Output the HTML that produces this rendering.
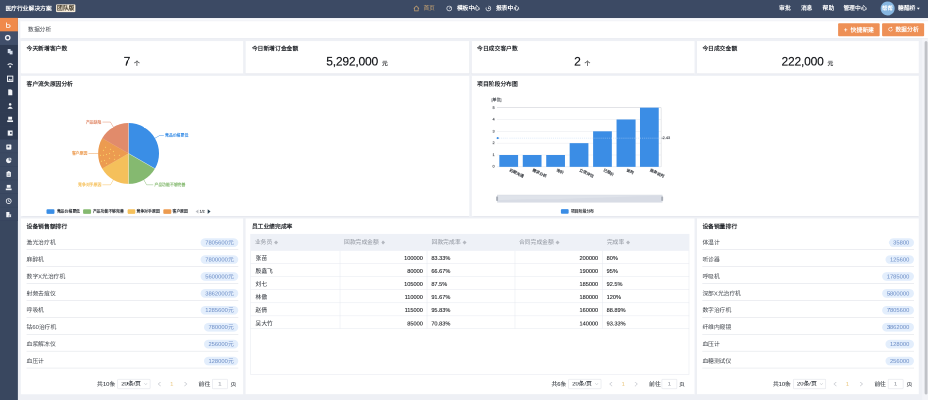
<!DOCTYPE html>
<html lang="zh-CN"><head><meta charset="utf-8"><title>数据分析</title>
<style>
html,body{margin:0;padding:0;width:928px;height:400px;overflow:hidden;background:#eef0f5}
body{font-family:"Liberation Sans",sans-serif}
#wrap{position:absolute;left:0;top:0;width:1856px;height:800px;transform:scale(0.5);transform-origin:0 0;will-change:transform;overflow:hidden;background:#eef0f5}
#app{position:absolute;left:0;top:0;width:1920px;height:830px;transform:scale(0.9666667);transform-origin:0 0;background:#eef0f5;color:#2b2f36;font-size:12px;line-height:1;overflow:hidden}
#app *{box-sizing:border-box}
.abs{position:absolute}
.t{position:absolute;white-space:nowrap;line-height:14px;height:14px}
.nav{position:absolute;left:0;top:0;width:1920px;height:36.5px;background:#3c4a64;color:#fff;border-bottom:1px solid #344159}
.side{position:absolute;left:0;top:37px;width:37px;height:800px;background:#39475f}
.si{position:absolute;left:0;width:37px;height:28px}
.card{position:absolute;background:#fff;box-shadow:0 1px 1.5px rgba(70,80,110,.10)}
.ct{position:absolute;left:13px;top:9px;font-weight:bold;font-size:12px;line-height:14px;color:#23262b;white-space:nowrap}
.num{position:absolute;left:0;right:0;top:27px;text-align:center;white-space:nowrap;line-height:30px;color:#16181c}
.num b{font-weight:normal;font-size:25px;letter-spacing:-0.45px;-webkit-text-stroke:0.35px #16181c}
.num i{font-style:normal;font-size:12px;margin-left:8px;-webkit-text-stroke:0.3px #16181c}
.btn{position:absolute;top:47.5px;height:27px;background:#ee9056;color:#fff;border-radius:2px;font-size:12px;font-weight:bold;line-height:27px;text-align:center;white-space:nowrap}
.row{position:absolute;left:13px;right:10.5px;height:35px;border-bottom:1px solid #d9dce3}
.row span{position:absolute;left:0;top:12.3px;line-height:14px;color:#3f434a}
.row em{position:absolute;right:0;top:10.3px;height:18px;line-height:18px;padding:0;text-align:center;border-radius:9px;background:#e3eefc;color:#688ac4;font-style:normal;font-size:12px}
.pg{position:absolute;top:332px;height:22px;font-size:12px;color:#3c4047;white-space:nowrap;-webkit-text-stroke:0.2px}
.pg .t{top:4px}
.pg .sel{position:absolute;top:0;height:21px;border:1px solid #d9dce3;border-radius:2px;line-height:19px;padding-left:7px;color:#3c4047}
.pg .inp{position:absolute;top:0;height:21px;border:1px solid #d9dce3;border-radius:2px;line-height:19px;text-align:center;color:#8d919a}
.th{position:absolute;top:0;height:34px;line-height:34px;color:#8c919b;padding-left:9px;white-space:nowrap}
.th s{text-decoration:none;font-size:8.5px;color:#b4b8c0;margin-left:4px}
.cl{position:absolute;white-space:nowrap;font-size:8px;line-height:10px;height:10px;-webkit-text-stroke:0.3px}
.td{position:absolute;top:0;height:26.85px;line-height:29.5px;color:#17191d;white-space:nowrap;font-size:11.6px;-webkit-text-stroke:0.22px}
</style></head>
<body>
<div id="wrap"><div id="app">
<div class="nav">
<div class="t" style="left:11px;top:11px;font-weight:bold;font-size:12px">医疗行业解决方案</div>
<div class="abs" style="left:116px;top:9px;width:40px;height:16px;background:#f7ecd9;color:#3a3326;border-radius:2px;font-size:12px;line-height:16px;text-align:center;font-weight:bold">团队版</div>
<svg class="abs" style="left:854.5px;top:11px" width="13" height="13" viewBox="0 0 12 12"><path d="M1 6 L6 1.2 L11 6 M2.6 5 V10.6 H9.4 V5" fill="none" stroke="#c9a472" stroke-width="1.3"/></svg>
<div class="t" style="left:876px;top:10px;color:#c9a472">首页</div>
<svg class="abs" style="left:922.5px;top:11px" width="13" height="13" viewBox="0 0 12 12"><circle cx="6" cy="6" r="4.6" fill="none" stroke="#eef0f4" stroke-width="1.3"/><path d="M6 6 L8.6 3.4" stroke="#eef0f4" stroke-width="1.3"/></svg>
<div class="t" style="left:945px;top:10px;font-weight:bold">模板中心</div>
<svg class="abs" style="left:1003.5px;top:11px" width="13" height="13" viewBox="0 0 12 12"><path d="M6 1.4 A4.6 4.6 0 1 1 1.9 3.9" fill="none" stroke="#eef0f4" stroke-width="1.3"/><path d="M6 3.4 V6.3 H8.4" fill="none" stroke="#eef0f4" stroke-width="1.3"/></svg>
<div class="t" style="left:1026px;top:10px;font-weight:bold">报表中心</div>
<div class="t" style="left:1612px;top:10px;font-weight:bold">审批</div>
<div class="t" style="left:1657px;top:10px;font-weight:bold">消息</div>
<div class="t" style="left:1702px;top:10px;font-weight:bold">帮助</div>
<div class="t" style="left:1745px;top:10px;font-weight:bold">管理中心</div>
<div class="abs" style="left:1821.5px;top:2.5px;width:29px;height:29px;border-radius:15px;background:#86b6e0;color:#fff;font-size:11px;font-weight:bold;line-height:29px;text-align:center">帮帮</div>
<div class="t" style="left:1858px;top:10px;font-weight:bold">糖醋桥</div>
<div class="abs" style="left:1897px;top:16px;width:0;height:0;border-left:3px solid transparent;border-right:3px solid transparent;border-top:4px solid #fff"></div>
</div>
<div class="side">
<div class="si" style="top:0px;background:#f08a4b"><svg class="abs" style="left:10px;top:7.5px" width="14" height="14" viewBox="0 0 14 14"><path d="M3.6 1.5 V11.6 H8.2 A2.7 2.7 0 0 0 8.2 6.2 H3.6" fill="none" stroke="#fff" stroke-width="1.7"/></svg></div>
<div class="si" style="top:28px;background:#414f6a"><svg class="abs" style="left:8.5px;top:6px" width="14" height="14" viewBox="0 0 14 14"><circle cx="7" cy="7" r="4.4" fill="none" stroke="#f2f4f8" stroke-width="3"/></svg></div>
<div class="si" style="top:56px;background:#2f3b52"><svg class="abs" style="left:14px;top:6.5px" width="14" height="14" viewBox="0 0 14 14"><path d="M2 1.5 H8 V10 H2Z M6 5 H12 V12.5 H6Z" fill="#d3dcea"/></svg></div>
<div class="si" style="top:84px;background:#2f3b52"><svg class="abs" style="left:14px;top:6.5px" width="14" height="14" viewBox="0 0 14 14"><path d="M2 6.5 A6 6 0 0 1 12 6.5" fill="none" stroke="#f2f4f8" stroke-width="2"/><circle cx="7" cy="10" r="2" fill="#f2f4f8"/></svg></div>
<div class="si" style="top:112px;background:#2f3b52"><svg class="abs" style="left:14px;top:6.5px" width="14" height="14" viewBox="0 0 14 14"><rect x="1.5" y="1.5" width="11" height="11" fill="none" stroke="#f2f4f8" stroke-width="2"/><path d="M3 10.5 L6 6.5 L8 9 L9.5 7.5 L11.5 10.5Z" fill="#f2f4f8"/></svg></div>
<div class="si" style="top:140px;background:#2f3b52"><svg class="abs" style="left:14px;top:6.5px" width="14" height="14" viewBox="0 0 14 14"><path d="M3 1 H9 L11.5 3.5 V13 H3Z" fill="#f2f4f8"/></svg></div>
<div class="si" style="top:168px;background:#2f3b52"><svg class="abs" style="left:14px;top:6.5px" width="14" height="14" viewBox="0 0 14 14"><circle cx="7" cy="4" r="2.6" fill="#f2f4f8"/><path d="M1.5 13 Q7 4.5 12.5 13Z" fill="#f2f4f8"/></svg></div>
<div class="si" style="top:196px;background:#2f3b52"><svg class="abs" style="left:14px;top:6.5px" width="14" height="14" viewBox="0 0 14 14"><rect x="3" y="1.5" width="8" height="6" fill="#f2f4f8"/><rect x="1" y="9" width="12" height="3.5" fill="#f2f4f8"/></svg></div>
<div class="si" style="top:224px;background:#2f3b52"><svg class="abs" style="left:14px;top:6.5px" width="14" height="14" viewBox="0 0 14 14"><path d="M2 2 H12 V12.5 H2Z" fill="#f2f4f8"/><rect x="7" y="5" width="3" height="4" fill="#2f3b52"/></svg></div>
<div class="si" style="top:252px;background:#3b4962;border-bottom:1px solid #33405a"><svg class="abs" style="left:10.5px;top:7.5px" width="14" height="14" viewBox="0 0 14 14"><rect x="2" y="2" width="10.5" height="10.5" rx="1.5" fill="#f2f4f8"/><rect x="4.5" y="4.5" width="4" height="3.5" fill="#3d4b65"/></svg></div>
<div class="si" style="top:280px;background:#3b4962;border-bottom:1px solid #33405a"><svg class="abs" style="left:10.5px;top:7.5px" width="14" height="14" viewBox="0 0 14 14"><path d="M7 1.5 A5.5 5.5 0 1 0 12.5 7 L7 7Z" fill="#f2f4f8"/><path d="M8.5 0.8 A5 5 0 0 1 13.2 5.5 L8.5 5.5Z" fill="#f2f4f8" opacity=".75"/></svg></div>
<div class="si" style="top:308px;background:#3b4962;border-bottom:1px solid #33405a"><svg class="abs" style="left:10.5px;top:7.5px" width="14" height="14" viewBox="0 0 14 14"><rect x="2.5" y="2.5" width="9" height="10.5" rx="1" fill="#f2f4f8"/><rect x="5" y="1" width="4" height="3" fill="#f2f4f8"/><path d="M4.5 7 H9.5 M4.5 9.5 H9.5" stroke="#3d4b65" stroke-width="1"/></svg></div>
<div class="si" style="top:336px;background:#3b4962;border-bottom:1px solid #33405a"><svg class="abs" style="left:10.5px;top:7.5px" width="14" height="14" viewBox="0 0 14 14"><rect x="3" y="1.5" width="8" height="6" fill="#f2f4f8"/><rect x="1" y="9" width="12" height="3.5" fill="#f2f4f8"/></svg></div>
<div class="si" style="top:364px;background:#3b4962;border-bottom:1px solid #33405a"><svg class="abs" style="left:10.5px;top:7.5px" width="14" height="14" viewBox="0 0 14 14"><circle cx="7" cy="7" r="5" fill="none" stroke="#f2f4f8" stroke-width="1.8"/><path d="M7 4 V7.3 L9.3 8.5" fill="none" stroke="#f2f4f8" stroke-width="1.5"/></svg></div>
<div class="si" style="top:392px;background:#3b4962;border-bottom:1px solid #33405a"><svg class="abs" style="left:10.5px;top:7.5px" width="14" height="14" viewBox="0 0 14 14"><path d="M2 1.5 H8.5 V6 H12 V12.5 H2Z" fill="#f2f4f8"/><circle cx="10" cy="10" r="2.6" fill="#f2f4f8" stroke="#3d4b65" stroke-width="1"/></svg></div>
</div>
<div class="card" style="left:42px;top:38.5px;width:1878px;height:40.5px"><div class="abs" style="left:0;top:1px;width:1878px;height:4px;background:#f3f4f8"></div><div class="t" style="left:16px;top:15.5px;font-size:12px;color:#3a3e45">数据分析</div></div>
<div class="btn" style="left:1734px;width:86px"><span style="font-size:13px">+</span>&nbsp; 快捷新建</div>
<div class="btn" style="left:1825px;width:87px"><svg width="11" height="11" viewBox="0 0 12 12" style="vertical-align:-1.5px;margin-right:5px"><path d="M10.2 6 A4.2 4.2 0 1 1 8.2 2.4" fill="none" stroke="#fff" stroke-width="1.2"/><path d="M6.8 0.6 L9.3 2.4 L7 4.2" fill="none" stroke="#fff" stroke-width="1.2"/></svg>数据分析</div>
<div class="card" style="left:42.6px;top:85px;width:460.4px;height:67px"><div class="abs" style="left:-0.6px;top:0;width:461px;height:67px"><div class="ct" style="top:8px">今天新增客户数</div><div class="num"><b>7</b><i>个</i></div></div></div>
<div class="card" style="left:508.0px;top:85px;width:462.9px;height:67px"><div class="abs" style="left:0.0px;top:0;width:461px;height:67px"><div class="ct" style="top:8px">今日新增订金金额</div><div class="num"><b>5,292,000</b><i>元</i></div></div></div>
<div class="card" style="left:975.9px;top:85px;width:460.8px;height:67px"><div class="abs" style="left:-1.9px;top:0;width:461px;height:67px"><div class="ct" style="top:8px">今日成交客户数</div><div class="num"><b>2</b><i>个</i></div></div></div>
<div class="card" style="left:1441.7px;top:85px;width:459.3px;height:67px"><div class="abs" style="left:-1.7px;top:0;width:461px;height:67px"><div class="ct" style="top:8px">今日成交金额</div><div class="num"><b>222,000</b><i>元</i></div></div></div>
<div class="card" style="left:42.6px;top:157px;width:928.3px;height:290px"><div class="abs" style="left:-0.6px;top:0;width:927px;height:290px"><div class="ct" style="top:10px">客户流失原因分析</div>
<svg class="abs" style="left:0;top:0" width="927" height="290" viewBox="0 0 927 290"><path d="M224 160.5 L224.00 97.50 A63 63 0 0 1 278.56 192.00Z" fill="#3a8ee6"/><path d="M224 160.5 L278.56 192.00 A63 63 0 0 1 224.00 223.50Z" fill="#85b970"/><path d="M224 160.5 L224.00 223.50 A63 63 0 0 1 169.44 192.00Z" fill="#f5c05b"/><path d="M224 160.5 L169.44 192.00 A63 63 0 0 1 169.44 129.00Z" fill="#ec9b50"/><path d="M224 160.5 L169.44 129.00 A63 63 0 0 1 224.00 97.50Z" fill="#e18b6b"/><circle cx="176.3" cy="147.8" r="1.25" fill="#f8cd63"/><circle cx="186.6" cy="151.9" r="1.25" fill="#f8cd63"/><circle cx="172.1" cy="154.0" r="1.25" fill="#f8cd63"/><circle cx="192.8" cy="156.4" r="1.25" fill="#f8cd63"/><circle cx="184.6" cy="160.6" r="1.25" fill="#f8cd63"/><circle cx="178.3" cy="162.7" r="1.25" fill="#f8cd63"/><circle cx="165.9" cy="164.3" r="1.25" fill="#f8cd63"/><circle cx="172.1" cy="164.3" r="1.25" fill="#f8cd63"/><circle cx="194.9" cy="164.3" r="1.25" fill="#f8cd63"/><circle cx="205.2" cy="164.3" r="1.25" fill="#f8cd63"/><circle cx="184.6" cy="170.5" r="1.25" fill="#f8cd63"/><circle cx="194.9" cy="172.6" r="1.25" fill="#f8cd63"/><circle cx="174.2" cy="175.1" r="1.25" fill="#f8cd63"/><circle cx="168.0" cy="176.7" r="1.25" fill="#f8cd63"/><circle cx="178.3" cy="180.9" r="1.25" fill="#f8cd63"/><path d="M224 160.5 L224.0 97.5" stroke="#fff" stroke-width="1" opacity=".8"/><path d="M224 160.5 L278.6 192.0" stroke="#fff" stroke-width="1" opacity=".8"/><path d="M224 160.5 L224.0 223.5" stroke="#fff" stroke-width="1" opacity=".8"/><path d="M278.6 129.0 L289.0 123.0 L297 123.0" fill="none" stroke="#3a8ee6" stroke-width="1"/><path d="M255.5 215.1 L261.5 225.5 L275 225.5" fill="none" stroke="#85b970" stroke-width="1"/><path d="M192.5 215.1 L186.5 225.5 L170 225.5" fill="none" stroke="#f5c05b" stroke-width="1"/><path d="M161.0 160.5 L153.0 160.5 L141 160.5" fill="none" stroke="#ec9b50" stroke-width="1"/><path d="M192.5 105.9 L186.5 95.5 L170 95.5" fill="none" stroke="#e18b6b" stroke-width="1"/><rect x="54.2" y="276" width="16.5" height="9.5" rx="2" fill="#3a8ee6"/><rect x="129.9" y="276" width="16.5" height="9.5" rx="2" fill="#85b970"/><rect x="221.4" y="276" width="16.5" height="9.5" rx="2" fill="#f5c05b"/><rect x="295.9" y="276" width="16.5" height="9.5" rx="2" fill="#ec9b50"/><path d="M368.5 276.5 L362.7 280.7 L368.5 285Z" fill="#b9bcc2"/><path d="M387.7 276 L393.6 280.7 L387.7 285.4Z" fill="#2f4554"/></svg>
<div class="cl" style="left:299.5px;top:118.0px;color:#3a8ee6">竞品价格更低</div><div class="cl" style="left:277.5px;top:220.5px;color:#85b970">产品功能不够完善</div><div class="cl" style="right:759.5px;top:220.5px;color:#f5c05b">竞争对手原因</div><div class="cl" style="right:788.5px;top:155.5px;color:#ec9b50">客户原因</div><div class="cl" style="right:759.5px;top:90.5px;color:#e18b6b">产品缺陷</div>
<div class="cl" style="left:75.5px;top:275.7px;color:#2a2d33">竞品价格更低</div>
<div class="cl" style="left:150px;top:275.7px;color:#2a2d33">产品功能不够完善</div>
<div class="cl" style="left:240.4px;top:275.7px;color:#2a2d33">竞争对手原因</div>
<div class="cl" style="left:314.9px;top:275.7px;color:#2a2d33">客户原因</div>
<div class="cl" style="left:371px;top:275.7px;color:#3c4046;font-size:7.5px">1/2</div>
</div></div>
<div class="card" style="left:975.9px;top:157px;width:925.1px;height:290px"><div class="abs" style="left:-1.9px;top:0;width:927px;height:290px"><div class="ct" style="top:10px">项目阶段分布图</div>
<svg class="abs" style="left:0;top:0" width="927" height="290" viewBox="0 0 927 290"><path d="M54.2 188.2 H393.8" stroke="#dde0e6" stroke-width="1"/><path d="M54.2 163.7 H393.8" stroke="#e6e8ec" stroke-width="1"/><path d="M54.2 139.2 H393.8" stroke="#e6e8ec" stroke-width="1"/><path d="M54.2 114.7 H393.8" stroke="#e6e8ec" stroke-width="1"/><path d="M54.2 90.2 H393.8" stroke="#e6e8ec" stroke-width="1"/><path d="M54.2 65.7 H393.8" stroke="#c3c6cc" stroke-width="1"/><path d="M393.8 65.7 V188.2" stroke="#c9ccd2" stroke-width="1"/><rect x="59.1" y="163.7" width="38.8" height="24.5" fill="#3b8de5"/><rect x="107.6" y="163.7" width="38.8" height="24.5" fill="#3b8de5"/><rect x="156.1" y="163.7" width="38.8" height="24.5" fill="#3b8de5"/><rect x="204.6" y="139.2" width="38.8" height="49.0" fill="#3b8de5"/><rect x="253.1" y="114.7" width="38.8" height="73.5" fill="#3b8de5"/><rect x="301.6" y="90.2" width="38.8" height="98.0" fill="#3b8de5"/><rect x="350.1" y="65.7" width="38.8" height="122.5" fill="#3b8de5"/><path d="M58.2 128.7 H393.8" stroke="#bdd7f5" stroke-width="1" stroke-dasharray="2 2"/><circle cx="55.7" cy="128.7" r="2.2" fill="#3b8de5"/><path d="M393.8 128.7 h4" stroke="#6f7780" stroke-width="1"/><rect x="55" y="246.5" width="341" height="15" fill="#dfe3ea" stroke="#d3d7df" stroke-width="1"/><path d="M57 257 L120 255 L180 255 L230 253 L290 251 L340 249 L394 248 V261 H57Z" fill="#d2d7e0" opacity=".55"/><rect x="52.5" y="249.5" width="4" height="9" rx="1" fill="#a9aeb8"/><rect x="394" y="249.5" width="4" height="9" rx="1" fill="#a9aeb8"/><rect x="186.5" y="275.8" width="16" height="9.5" rx="2" fill="#3b8de5"/></svg>
<div class="cl" style="left:43px;top:45px;color:#4a4e55">[单位]</div>
<div class="cl" style="left:30px;width:19.5px;text-align:right;top:183.2px;color:#4a4e55">0</div>
<div class="cl" style="left:30px;width:19.5px;text-align:right;top:158.7px;color:#4a4e55">1</div>
<div class="cl" style="left:30px;width:19.5px;text-align:right;top:134.2px;color:#4a4e55">2</div>
<div class="cl" style="left:30px;width:19.5px;text-align:right;top:109.7px;color:#4a4e55">3</div>
<div class="cl" style="left:30px;width:19.5px;text-align:right;top:85.2px;color:#4a4e55">4</div>
<div class="cl" style="left:30px;width:19.5px;text-align:right;top:60.7px;color:#4a4e55">5</div>
<div class="cl" style="left:79.5px;top:190.2px;color:#2e3238;transform:rotate(26deg);transform-origin:0 50%">初期沟通</div>
<div class="cl" style="left:128.0px;top:190.2px;color:#2e3238;transform:rotate(26deg);transform-origin:0 50%">需求分析</div>
<div class="cl" style="left:176.5px;top:190.2px;color:#2e3238;transform:rotate(26deg);transform-origin:0 50%">询价</div>
<div class="cl" style="left:225.0px;top:190.2px;color:#2e3238;transform:rotate(26deg);transform-origin:0 50%">立项评估</div>
<div class="cl" style="left:273.5px;top:190.2px;color:#2e3238;transform:rotate(26deg);transform-origin:0 50%">已报价</div>
<div class="cl" style="left:322.0px;top:190.2px;color:#2e3238;transform:rotate(26deg);transform-origin:0 50%">谈判</div>
<div class="cl" style="left:370.5px;top:190.2px;color:#2e3238;transform:rotate(26deg);transform-origin:0 50%">商务谈判</div>
<div class="cl" style="left:397px;top:123.7px;color:#4a4e55">2.43</div>
<div class="cl" style="left:207px;top:275.7px;color:#2a2d33">项目阶段分布</div>
</div></div>
<div class="card" style="left:42.6px;top:452px;width:460.4px;height:364px"><div class="abs" style="left:-0.6px;top:0;width:461px;height:364px"><div class="ct" style="top:9.5px">设备销售额排行</div>
<div class="row" style="top:30.4px"><span>激光治疗机</span><em style="width:77.1px">7805600元</em></div>
<div class="row" style="top:65.4px"><span>麻醉机</span><em style="width:77.1px">7800000元</em></div>
<div class="row" style="top:100.4px"><span>数字X光治疗机</span><em style="width:77.1px">5600000元</em></div>
<div class="row" style="top:135.4px"><span>射频去痘仪</span><em style="width:77.1px">3862000元</em></div>
<div class="row" style="top:170.4px"><span>呼吸机</span><em style="width:77.1px">1285600元</em></div>
<div class="row" style="top:205.4px"><span>钴60治疗机</span><em style="width:70.4px">780000元</em></div>
<div class="row" style="top:240.4px"><span>血浆解冻仪</span><em style="width:70.4px">256000元</em></div>
<div class="row" style="top:275.4px"><span>血压计</span><em style="width:70.4px">128000元</em></div>
<div class="pg" style="left:0;width:461px">
<div class="t" style="left:159px">共10条</div>
<div class="sel" style="left:201px;width:68px">20条/页<svg class="abs" style="right:5px;top:7px" width="7" height="5" viewBox="0 0 7 5"><path d="M0.5 0.8 L3.5 4 L6.5 0.8" fill="none" stroke="#b0b4bc" stroke-width="1"/></svg></div>
<svg class="abs" style="left:284px;top:5px" width="8" height="11" viewBox="0 0 8 11"><path d="M6.5 1 L1.5 5.5 L6.5 10" fill="none" stroke="#c2c5cc" stroke-width="1.3"/></svg>
<div class="t" style="left:310px;color:#ecce8e">1</div>
<svg class="abs" style="left:338px;top:5px" width="8" height="11" viewBox="0 0 8 11"><path d="M1.5 1 L6.5 5.5 L1.5 10" fill="none" stroke="#c2c5cc" stroke-width="1.3"/></svg>
<div class="t" style="left:369px">前往</div>
<div class="inp" style="left:397px;width:32px">1</div>
<div class="t" style="left:435px">页</div>
</div></div></div>
<div class="card" style="left:508.0px;top:452px;width:928.7px;height:364px"><div class="abs" style="left:0.0px;top:0;width:927px;height:364px"><div class="ct" style="top:9.5px">员工业绩完成率</div>
<div class="abs" style="left:10.2px;top:32px;width:907.9px;height:290.5px;border:1px solid #e4e7ee;border-top:none"></div>
<div class="abs" style="left:10.2px;top:32px;width:907.9px;height:35.3px;background:#eef1f7">
<div class="th" style="left:0.0px;width:184.6px">业务员<s>&#9670;</s></div>
<div class="th" style="left:184.6px;width:181.1px">回款完成金额<s>&#9670;</s></div>
<div class="th" style="left:365.7px;width:180.8px">回款完成率<s>&#9670;</s></div>
<div class="th" style="left:546.5px;width:181.9px">合同完成金额<s>&#9670;</s></div>
<div class="th" style="left:728.4px;width:179.5px">完成率<s>&#9670;</s></div>
</div>
<div class="abs" style="left:10.2px;top:67.30px;width:907.9px;height:26.85px;border-bottom:1px solid #e4e7ee">
<div class="td" style="left:0.0px;width:184.6px;padding-left:10.5px;color:#43474e">张苗</div>
<div class="td" style="left:184.6px;width:181.1px;text-align:right;padding-right:8px;border-left:1px solid #e4e7ee;border-right:1px solid #e4e7ee">100000</div>
<div class="td" style="left:365.7px;width:180.8px;padding-left:8.5px">83.33%</div>
<div class="td" style="left:546.5px;width:181.9px;text-align:right;padding-right:8px;border-left:1px solid #e4e7ee;border-right:1px solid #e4e7ee">200000</div>
<div class="td" style="left:728.4px;width:179.5px;padding-left:8.5px">80%</div>
</div>
<div class="abs" style="left:10.2px;top:94.15px;width:907.9px;height:26.85px;border-bottom:1px solid #e4e7ee">
<div class="td" style="left:0.0px;width:184.6px;padding-left:10.5px;color:#43474e">殷鑫飞</div>
<div class="td" style="left:184.6px;width:181.1px;text-align:right;padding-right:8px;border-left:1px solid #e4e7ee;border-right:1px solid #e4e7ee">80000</div>
<div class="td" style="left:365.7px;width:180.8px;padding-left:8.5px">66.67%</div>
<div class="td" style="left:546.5px;width:181.9px;text-align:right;padding-right:8px;border-left:1px solid #e4e7ee;border-right:1px solid #e4e7ee">190000</div>
<div class="td" style="left:728.4px;width:179.5px;padding-left:8.5px">95%</div>
</div>
<div class="abs" style="left:10.2px;top:121.00px;width:907.9px;height:26.85px;border-bottom:1px solid #e4e7ee">
<div class="td" style="left:0.0px;width:184.6px;padding-left:10.5px;color:#43474e">刘七</div>
<div class="td" style="left:184.6px;width:181.1px;text-align:right;padding-right:8px;border-left:1px solid #e4e7ee;border-right:1px solid #e4e7ee">105000</div>
<div class="td" style="left:365.7px;width:180.8px;padding-left:8.5px">87.5%</div>
<div class="td" style="left:546.5px;width:181.9px;text-align:right;padding-right:8px;border-left:1px solid #e4e7ee;border-right:1px solid #e4e7ee">185000</div>
<div class="td" style="left:728.4px;width:179.5px;padding-left:8.5px">92.5%</div>
</div>
<div class="abs" style="left:10.2px;top:147.85px;width:907.9px;height:26.85px;border-bottom:1px solid #e4e7ee">
<div class="td" style="left:0.0px;width:184.6px;padding-left:10.5px;color:#43474e">林傲</div>
<div class="td" style="left:184.6px;width:181.1px;text-align:right;padding-right:8px;border-left:1px solid #e4e7ee;border-right:1px solid #e4e7ee">110000</div>
<div class="td" style="left:365.7px;width:180.8px;padding-left:8.5px">91.67%</div>
<div class="td" style="left:546.5px;width:181.9px;text-align:right;padding-right:8px;border-left:1px solid #e4e7ee;border-right:1px solid #e4e7ee">180000</div>
<div class="td" style="left:728.4px;width:179.5px;padding-left:8.5px">120%</div>
</div>
<div class="abs" style="left:10.2px;top:174.70px;width:907.9px;height:26.85px;border-bottom:1px solid #e4e7ee">
<div class="td" style="left:0.0px;width:184.6px;padding-left:10.5px;color:#43474e">赵倩</div>
<div class="td" style="left:184.6px;width:181.1px;text-align:right;padding-right:8px;border-left:1px solid #e4e7ee;border-right:1px solid #e4e7ee">115000</div>
<div class="td" style="left:365.7px;width:180.8px;padding-left:8.5px">95.83%</div>
<div class="td" style="left:546.5px;width:181.9px;text-align:right;padding-right:8px;border-left:1px solid #e4e7ee;border-right:1px solid #e4e7ee">160000</div>
<div class="td" style="left:728.4px;width:179.5px;padding-left:8.5px">88.89%</div>
</div>
<div class="abs" style="left:10.2px;top:201.55px;width:907.9px;height:26.85px;border-bottom:1px solid #e4e7ee">
<div class="td" style="left:0.0px;width:184.6px;padding-left:10.5px;color:#43474e">吴大竹</div>
<div class="td" style="left:184.6px;width:181.1px;text-align:right;padding-right:8px;border-left:1px solid #e4e7ee;border-right:1px solid #e4e7ee">85000</div>
<div class="td" style="left:365.7px;width:180.8px;padding-left:8.5px">70.83%</div>
<div class="td" style="left:546.5px;width:181.9px;text-align:right;padding-right:8px;border-left:1px solid #e4e7ee;border-right:1px solid #e4e7ee">140000</div>
<div class="td" style="left:728.4px;width:179.5px;padding-left:8.5px">93.33%</div>
</div>
<div class="pg" style="left:0;width:927px">
<div class="t" style="left:633px">共6条</div>
<div class="sel" style="left:668px;width:68px">20条/页<svg class="abs" style="right:5px;top:7px" width="7" height="5" viewBox="0 0 7 5"><path d="M0.5 0.8 L3.5 4 L6.5 0.8" fill="none" stroke="#b0b4bc" stroke-width="1"/></svg></div>
<svg class="abs" style="left:752px;top:5px" width="8" height="11" viewBox="0 0 8 11"><path d="M6.5 1 L1.5 5.5 L6.5 10" fill="none" stroke="#c2c5cc" stroke-width="1.3"/></svg>
<div class="t" style="left:778px;color:#ecce8e">1</div>
<svg class="abs" style="left:804px;top:5px" width="8" height="11" viewBox="0 0 8 11"><path d="M1.5 1 L6.5 5.5 L1.5 10" fill="none" stroke="#c2c5cc" stroke-width="1.3"/></svg>
<div class="t" style="left:835px">前往</div>
<div class="inp" style="left:861px;width:32px">1</div>
<div class="t" style="left:896.5px">页</div>
</div></div></div>
<div class="card" style="left:1441.7px;top:452px;width:459.3px;height:364px"><div class="abs" style="left:-1.7px;top:0;width:461px;height:364px"><div class="ct" style="top:9.5px">设备销量排行</div>
<div class="row" style="top:30.4px"><span>体温计</span><em style="width:51.8px">35800</em></div>
<div class="row" style="top:65.4px"><span>听诊器</span><em style="width:58.4px">125600</em></div>
<div class="row" style="top:100.4px"><span>呼吸机</span><em style="width:65.1px">1785000</em></div>
<div class="row" style="top:135.4px"><span>深部X光治疗机</span><em style="width:65.1px">5800000</em></div>
<div class="row" style="top:170.4px"><span>数字治疗机</span><em style="width:65.1px">7805600</em></div>
<div class="row" style="top:205.4px"><span>纤维内窥镜</span><em style="width:65.1px">3862000</em></div>
<div class="row" style="top:240.4px"><span>血压计</span><em style="width:58.4px">128000</em></div>
<div class="row" style="top:275.4px"><span>血糖测试仪</span><em style="width:58.4px">256000</em></div>
<div class="pg" style="left:0;width:461px">
<div class="t" style="left:159px">共10条</div>
<div class="sel" style="left:201px;width:68px">20条/页<svg class="abs" style="right:5px;top:7px" width="7" height="5" viewBox="0 0 7 5"><path d="M0.5 0.8 L3.5 4 L6.5 0.8" fill="none" stroke="#b0b4bc" stroke-width="1"/></svg></div>
<svg class="abs" style="left:284px;top:5px" width="8" height="11" viewBox="0 0 8 11"><path d="M6.5 1 L1.5 5.5 L6.5 10" fill="none" stroke="#c2c5cc" stroke-width="1.3"/></svg>
<div class="t" style="left:310px;color:#ecce8e">1</div>
<svg class="abs" style="left:338px;top:5px" width="8" height="11" viewBox="0 0 8 11"><path d="M1.5 1 L6.5 5.5 L1.5 10" fill="none" stroke="#c2c5cc" stroke-width="1.3"/></svg>
<div class="t" style="left:369px">前往</div>
<div class="inp" style="left:397px;width:32px">1</div>
<div class="t" style="left:435px">页</div>
</div></div></div>
<div class="abs" style="left:1908px;top:80px;width:12px;height:750px;background:#f3f4f8"></div>
<div class="abs" style="left:1913px;top:85px;width:6px;height:731px;background:#c0c2c7;border-radius:3px"></div>
</div></div>
</body></html>
